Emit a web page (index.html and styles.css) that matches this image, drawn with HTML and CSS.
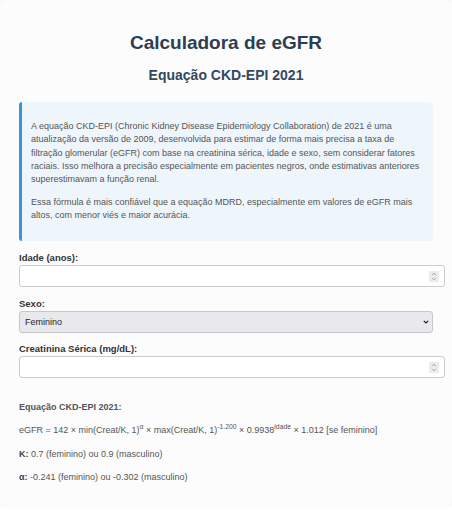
FILE: index.html
```html
<!DOCTYPE html>
<html lang="pt-BR">
<head>
<meta charset="utf-8">
<title>Calculadora de eGFR</title>
<link rel="stylesheet" href="styles.css">
</head>
<body>
<div class="container">
  <h1 class="title">Calculadora de eGFR</h1>
  <h2 class="subtitle">Equação CKD-EPI 2021</h2>

  <div class="info">
    <p>A equação CKD-EPI (Chronic Kidney Disease Epidemiology Collaboration) de 2021 é uma atualização da versão de 2009, desenvolvida para estimar de forma mais precisa a taxa de filtração glomerular (eGFR) com base na creatinina sérica, idade e sexo, sem considerar fatores raciais. Isso melhora a precisão especialmente em pacientes negros, onde estimativas anteriores superestimavam a função renal.</p>
    <p>Essa fórmula é mais confiável que a equação MDRD, especialmente em valores de eGFR mais altos, com menor viés e maior acurácia.</p>
  </div>

  <div class="form-group">
    <label class="label" for="idade">Idade (anos):</label>
    <div class="field-wrap">
      <input class="field" type="number" id="idade">
      <span class="spin" aria-hidden="true">
        <svg width="6" height="9" viewBox="0 0 6 9"><path d="M1 3.2 L3 1.2 L5 3.2 M1 5.8 L3 7.8 L5 5.8" fill="none" stroke="#9a9a9a" stroke-width="0.9"/></svg>
      </span>
    </div>
  </div>
  <div class="form-group">
    <label class="label" for="sexo">Sexo:</label>
    <div class="field-wrap">
      <select class="select" id="sexo">
        <option>Feminino</option>
        <option>Masculino</option>
      </select>
      <svg class="chevron" width="6" height="4" viewBox="0 0 6 4" aria-hidden="true"><path d="M0.8 0.8 L3 3 L5.2 0.8" fill="none" stroke="#222" stroke-width="1.2"/></svg>
    </div>
  </div>
  <div class="form-group">
    <label class="label" for="creat">Creatinina Sérica (mg/dL):</label>
    <div class="field-wrap">
      <input class="field" type="number" id="creat">
      <span class="spin" aria-hidden="true">
        <svg width="6" height="9" viewBox="0 0 6 9"><path d="M1 3.2 L3 1.2 L5 3.2 M1 5.8 L3 7.8 L5 5.8" fill="none" stroke="#9a9a9a" stroke-width="0.9"/></svg>
      </span>
    </div>
  </div>

  <div class="formula">
    <h3 class="formula-title">Equação CKD-EPI 2021:</h3>
    <p class="formula-line">eGFR = 142 × min(Creat/K, 1)<sup>α</sup> × max(Creat/K, 1)<sup>-1.200</sup> × 0.9938<sup>idade</sup> × 1.012 [se feminino]</p>
    <p class="formula-line"><strong>K:</strong> 0.7 (feminino) ou 0.9 (masculino)</p>
    <p class="formula-line"><strong>α:</strong> -0.241 (feminino) ou -0.302 (masculino)</p>
  </div>
</div>
</body>
</html>
```

FILE: styles.css
```css
html, body {
  margin: 0;
  padding: 0;
  background: #ffffff;
}

body {
  font-family: "Liberation Sans", Arial, Helvetica, sans-serif;
  font-size: 9px;
  color: #333;
}

.container {
  width: 414px;
  margin: 0;
  padding: 19px 19px 13px 19px;
  background: #fcfcfc;
  border-radius: 8px;
  box-shadow: 0 0 6px rgba(0, 0, 0, 0.08);
}

.title {
  margin: 13px 0 12.5px;
  font-size: 19px;
  line-height: 22px;
  text-align: center;
  color: #2c3e50;
}

.subtitle {
  margin: 0 0 19px;
  font-size: 14px;
  line-height: 16px;
  text-align: center;
  color: #34495e;
}

.info {
  background: #eef6fc;
  border-left: 3px solid #3498db;
  border-radius: 3px;
  padding: 9px 10px 9px 9px;
  margin-bottom: 11px;
  color: #555;
  font-size: 9px;
}

.info p {
  margin: 9.5px 0;
  line-height: 13.3px;
}

.form-group {
  margin-bottom: 10.5px;
}

.label {
  display: block;
  font-weight: bold;
  font-size: 9.5px;
  line-height: 11px;
  margin-bottom: 2px;
  color: #333;
}

.field-wrap {
  position: relative;
}

.field {
  display: block;
  width: 100%;
  padding: 5px;
  border: 1px solid #ccc;
  border-radius: 3px;
  font-family: inherit;
  font-size: 9px;
  line-height: 10px;
  background: #fff;
  box-sizing: content-box;
  margin: 0;
}

.spin {
  position: absolute;
  right: -6px;
  top: 5.5px;
  width: 10px;
  height: 11px;
  background: #ececec;
  display: flex;
  align-items: center;
  justify-content: center;
}

.select {
  display: block;
  width: 100%;
  height: 22px;
  padding: 0 5px;
  border: 1px solid #c8c8c8;
  border-radius: 3px;
  font-family: inherit;
  font-size: 9px;
  background-color: #e9e9ed;
  color: #222;
  margin: 0;
  appearance: none;
  -webkit-appearance: none;
}

.chevron {
  position: absolute;
  right: 4px;
  top: 9px;
  pointer-events: none;
}

.formula {
  color: #555;
}

.formula-title {
  margin: 23px 0 0;
  font-size: 9px;
  line-height: 13px;
  color: #555;
}

.formula-line {
  margin: 10.3px 0;
  font-size: 9px;
  line-height: 13px;
}

.formula-line sup {
  font-size: 6.8px;
  line-height: 0;
}

.formula-line strong {
  color: #444;
}
```
